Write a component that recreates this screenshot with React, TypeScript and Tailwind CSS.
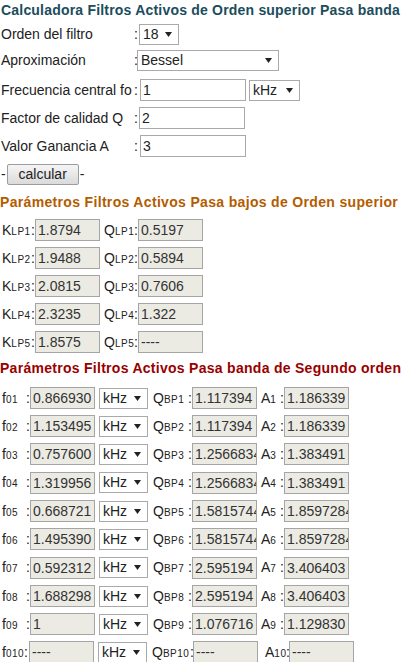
import type { ReactNode } from 'react';

const lp = [
  ['1', '1.8794', '0.5197'],
  ['2', '1.9488', '0.5894'],
  ['3', '2.0815', '0.7606'],
  ['4', '2.3235', '1.322'],
  ['5', '1.8575', '----'],
];

const bp = [
  ['1', '0.866930', '1.117394', '1.186339'],
  ['2', '1.153495', '1.117394', '1.186339'],
  ['3', '0.757600', '1.2566834', '1.383491'],
  ['4', '1.319956', '1.2566834', '1.383491'],
  ['5', '0.668721', '1.5815744', '1.8597284'],
  ['6', '1.495390', '1.5815744', '1.8597284'],
  ['7', '0.592312', '2.595194', '3.406403'],
  ['8', '1.688298', '2.595194', '3.406403'],
  ['9', '1', '1.076716', '1.129830'],
];

// row heights so the rows land where the original table put them
const bpHeights = ['h-[28px]', 'h-[28px]', 'h-[28px]', 'h-[29px]', 'h-[28px]', 'h-[28px]', 'h-[29px]', 'h-[28px]', 'h-[28px]'];

const Tri = () => (
  <svg width="7" height="5" viewBox="0 0 7 5" className="shrink-0">
    <path d="M0 0h7L3.5 5z" fill="#222" />
  </svg>
);

function Select({ value, className = '' }: { value: string; className?: string }) {
  return (
    <div className={`h-[21px] border border-[#a9a9a9] bg-white flex items-center justify-between pl-[3px] pr-[6px] leading-[19px] ${className}`}>
      <span>{value}</span>
      <Tri />
    </div>
  );
}

function Input({ value, className = '' }: { value: string; className?: string }) {
  return (
    <div className={`w-[106px] h-[22px] border border-[#a9a9a9] bg-white pl-[2px] leading-[20px] ${className}`}>{value}</div>
  );
}

function Box({ v, className = '' }: { v: string; className?: string }) {
  return (
    <div className={`w-[65px] h-[22px] shrink-0 border border-[#a5a5a5] bg-[#ebebe4] text-[#333] pl-[2px] leading-[20px] overflow-hidden whitespace-nowrap ${className}`}>
      {v}
    </div>
  );
}

const Sub = ({ children }: { children: ReactNode }) => (
  <span className="text-[10px] tracking-[0.5px]">{children}</span>
);

function FormRow({ label, children, pad = '' }: { label: string; children: ReactNode; pad?: string }) {
  return (
    <div className={`flex items-center h-[28px] ${pad}`}>
      <span className="w-[134px] pl-[1px] whitespace-nowrap">{label}</span>
      <span className="w-[3px]">:</span>
      {children}
    </div>
  );
}

export default function App() {
  return (
    <div className="w-[408px] h-[662px] overflow-hidden bg-white text-[14px] text-[#222] font-['Liberation_Sans',Arial,sans-serif]">
      <h1 className="h-[20px] leading-[20px] pl-[1px] font-bold text-[#1b4d5c] whitespace-nowrap tracking-[0.2px]">
        Calculadora Filtros Activos de Orden superior Pasa banda
      </h1>

      <FormRow label="Orden del filtro">
        <Select value="18" className="w-[40px] ml-[2px]" />
      </FormRow>
      <FormRow label="Aproximación" pad="pb-[4px]">
        <Select value="Bessel" className="w-[142px]" />
      </FormRow>
      <FormRow label="Frecuencia central fo">
        <Input value="1" className="ml-[3px]" />
        <Select value="kHz" className="w-[51px] ml-[3px]" />
      </FormRow>
      <FormRow label="Factor de calidad Q">
        <Input value="2" className="ml-[2px]" />
      </FormRow>
      <FormRow label="Valor Ganancia A">
        <Input value="3" className="ml-[3px]" />
      </FormRow>

      <div className="flex items-center h-[28px] pl-[1px]">
        <span>-</span>
        <button className="ml-[1px] w-[72px] h-[21px] border border-[#9c9c9c] rounded-[2px] bg-gradient-to-b from-[#f6f6f6] to-[#dadada] leading-[19px] text-[#222]">
          calcular
        </button>
        <span className="ml-[1px]">-</span>
      </div>

      <h2 className="h-[28px] leading-[28px] font-bold text-[#b35c00] whitespace-nowrap tracking-[0.33px]">
        Parámetros Filtros Activos Pasa bajos de Orden superior
      </h2>

      {lp.map(([n, k, q]) => (
        <div key={n} className="flex items-center h-[28px]">
          <span className="w-[31px] pl-[2px] whitespace-nowrap">K<Sub>LP{n}</Sub></span>
          <span className="w-[4px]">:</span>
          <Box v={k} />
          <span className="ml-[4px] w-[30px] whitespace-nowrap">Q<Sub>LP{n}</Sub></span>
          <span className="w-[4px]">:</span>
          <Box v={q} />
        </div>
      ))}

      <h2 className="h-[28px] leading-[24px] font-bold text-[#990000] whitespace-nowrap tracking-[0.28px]">
        Parámetros Filtros Activos Pasa banda de Segundo orden
      </h2>

      {bp.map(([n, f, q, a], i) => (
        <div key={n} className={`flex items-center ${bpHeights[i]}`}>
          <span className="w-[26px] pl-[2px] whitespace-nowrap">f<Sub>0{n}</Sub></span>
          <span className="w-[4px]">:</span>
          <Box v={f} />
          <Select value="kHz" className="w-[49px] ml-[4px]" />
          <span className="ml-[5px] w-[35px] whitespace-nowrap">Q<Sub>BP{n}</Sub></span>
          <span className="w-[4px]">:</span>
          <Box v={q} />
          <span className="ml-[4px] w-[19px] whitespace-nowrap">A<Sub>{n}</Sub></span>
          <span className="w-[4px]">:</span>
          <Box v={a} />
        </div>
      ))}

      <div className="flex items-center h-[28px]">
        <span className="w-[24px] pl-[2px] whitespace-nowrap">f<Sub>010</Sub></span>
        <span className="w-[5px]">:</span>
        <Box v="----" />
        <Select value="kHz" className="w-[49px] ml-[4px]" />
        <span className="ml-[5px] w-[38px] whitespace-nowrap">Q<Sub>BP10</Sub></span>
        <span className="w-[3px]">:</span>
        <Box v="----" />
        <span className="ml-[7px] w-[21px] whitespace-nowrap">A<Sub>10</Sub></span>
        <span className="w-[3px]">:</span>
        <Box v="----" />
      </div>
    </div>
  );
}
